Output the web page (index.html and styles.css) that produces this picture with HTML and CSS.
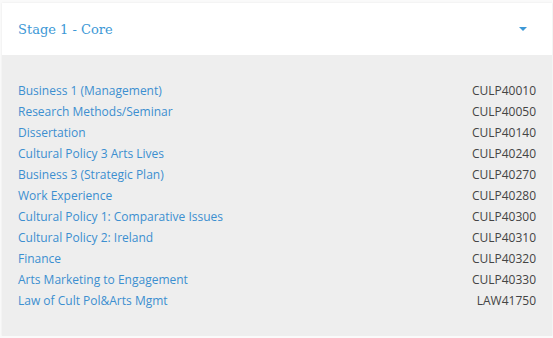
FILE: index.html
```html
<!DOCTYPE html>
<html lang="en">
<head>
    <meta charset="UTF-8">
    <meta name="viewport" content="width=device-width, initial-scale=1.0">
    <title>Stage 1 - Core</title>
    <link rel="stylesheet" href="styles.css">
</head>
<body>
    <div class="panel">
        <div class="panel-head">
            <span class="panel-title">Stage 1 - Core</span>
            <span class="caret"></span>
        </div>
        <div class="panel-body">
            <ul class="modules">
                <li><a href="#">Business 1 (Management)</a><span class="code">CULP40010</span></li>
                <li><a href="#">Research Methods/Seminar</a><span class="code">CULP40050</span></li>
                <li><a href="#">Dissertation</a><span class="code">CULP40140</span></li>
                <li><a href="#">Cultural Policy 3 Arts Lives</a><span class="code">CULP40240</span></li>
                <li><a href="#">Business 3 (Strategic Plan)</a><span class="code">CULP40270</span></li>
                <li><a href="#">Work Experience</a><span class="code">CULP40280</span></li>
                <li><a href="#">Cultural Policy 1: Comparative Issues</a><span class="code">CULP40300</span></li>
                <li><a href="#">Cultural Policy 2: Ireland</a><span class="code">CULP40310</span></li>
                <li><a href="#">Finance</a><span class="code">CULP40320</span></li>
                <li><a href="#">Arts Marketing to Engagement</a><span class="code">CULP40330</span></li>
                <li><a href="#">Law of Cult Pol&amp;Arts Mgmt</a><span class="code">LAW41750</span></li>
            </ul>
        </div>
    </div>
</body>
</html>
```

FILE: styles.css
```css
body {
    margin: 0;
    background-color: #fafafa;
    font-family: "Open Sans", "Liberation Sans", sans-serif;
}
.panel {
    margin: 3px 1px 0 2px;
    box-shadow: 0 0 2px rgba(0, 0, 0, 0.08);
}
.panel-head {
    display: flex;
    justify-content: space-between;
    align-items: center;
    height: 52px;
    padding: 0 25px 0 16px;
    background-color: white;
}
.panel-title {
    font-family: "DejaVu Serif", serif;
    font-size: 13px;
    color: #3c98d6;
}
.caret {
    width: 0;
    height: 0;
    border-left: 4px solid transparent;
    border-right: 4px solid transparent;
    border-top: 4px solid #3c98d6;
}
.panel-body {
    background-color: #eeeeee;
    padding: 25px 16px 25px 16px;
}
.modules {
    list-style: none;
    margin: 0;
    padding: 0;
}
.modules li {
    display: flex;
    justify-content: space-between;
    line-height: 21px;
    font-size: 12px;
}
.modules a {
    color: #3c8fd0;
    text-decoration: none;
}
.code {
    color: #444;
}
```
